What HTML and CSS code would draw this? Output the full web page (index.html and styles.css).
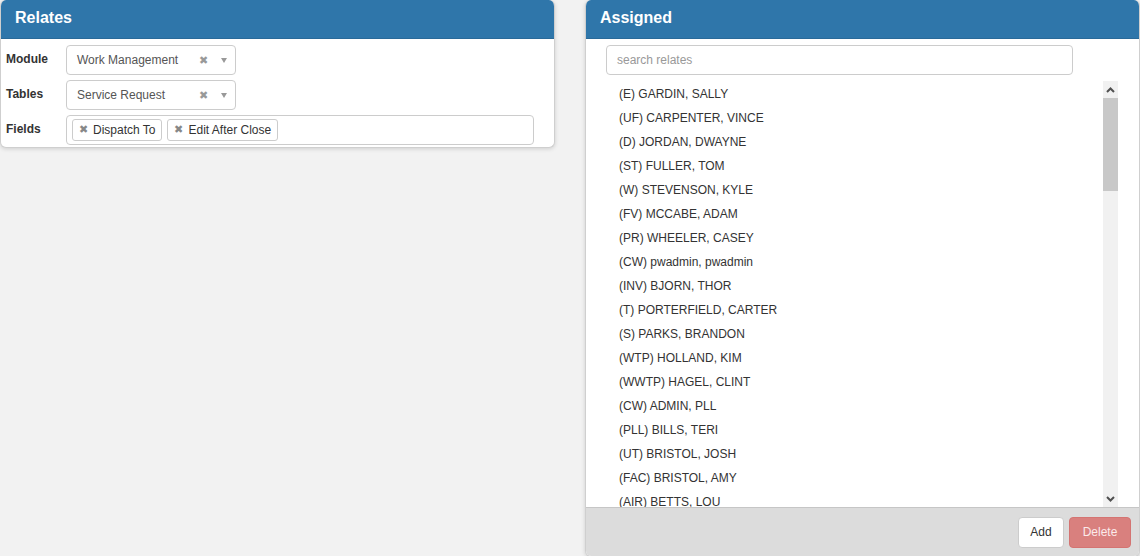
FILE: index.html
```html
<!DOCTYPE html>
<html lang="en">
<head>
    <meta charset="UTF-8">
    <title>Relates</title>
    <link rel="stylesheet" href="styles.css">
</head>
<body>
    <div class="page">
        <div class="panel relates">
            <div class="panel-heading">Relates</div>
            <div class="panel-body form">
                <div class="row">
                    <label>Module</label>
                    <div class="select">
                        <span class="value">Work Management</span>
                        <span class="clear">&#x2716;</span>
                        <span class="caret"></span>
                    </div>
                </div>
                <div class="row">
                    <label>Tables</label>
                    <div class="select">
                        <span class="value">Service Request</span>
                        <span class="clear">&#x2716;</span>
                        <span class="caret"></span>
                    </div>
                </div>
                <div class="row">
                    <label>Fields</label>
                    <div class="multi">
                        <span class="tag"><span class="x">&#x2716;</span>Dispatch To</span>
                        <span class="tag"><span class="x">&#x2716;</span>Edit After Close</span>
                    </div>
                </div>
            </div>
        </div>

        <div class="panel assigned">
            <div class="panel-heading">Assigned</div>
            <div class="panel-body">
                <div class="search">search relates</div>
                <div class="list-wrap">
                    <ul class="list">
                        <li>(E) GARDIN, SALLY</li>
                        <li>(UF) CARPENTER, VINCE</li>
                        <li>(D) JORDAN, DWAYNE</li>
                        <li>(ST) FULLER, TOM</li>
                        <li>(W) STEVENSON, KYLE</li>
                        <li>(FV) MCCABE, ADAM</li>
                        <li>(PR) WHEELER, CASEY</li>
                        <li>(CW) pwadmin, pwadmin</li>
                        <li>(INV) BJORN, THOR</li>
                        <li>(T) PORTERFIELD, CARTER</li>
                        <li>(S) PARKS, BRANDON</li>
                        <li>(WTP) HOLLAND, KIM</li>
                        <li>(WWTP) HAGEL, CLINT</li>
                        <li>(CW) ADMIN, PLL</li>
                        <li>(PLL) BILLS, TERI</li>
                        <li>(UT) BRISTOL, JOSH</li>
                        <li>(FAC) BRISTOL, AMY</li>
                        <li>(AIR) BETTS, LOU</li>
                    </ul>
                    <div class="scrollbar">
                        <div class="arrow">
                            <svg width="9" height="6" viewBox="0 0 9 6"><path d="M1 5 L4.5 1.5 L8 5" fill="none" stroke="#505050" stroke-width="2"/></svg>
                        </div>
                        <div class="track"><div class="thumb"></div></div>
                        <div class="arrow">
                            <svg width="9" height="6" viewBox="0 0 9 6"><path d="M1 1 L4.5 4.5 L8 1" fill="none" stroke="#505050" stroke-width="2"/></svg>
                        </div>
                    </div>
                </div>
            </div>
            <div class="panel-footer">
                <button class="btn">Add</button>
                <button class="btn btn-danger">Delete</button>
            </div>
        </div>
    </div>
</body>
</html>
```

FILE: styles.css
```css
body {
    margin: 0;
    background: #f2f2f2;
    font-family: 'Liberation Sans', Arial, sans-serif;
    font-size: 12px;
    color: #333;
}
.page {
    display: flex;
    align-items: flex-start;
    height: 556px;
    overflow: hidden;
}
.panel {
    background: #fff;
    border: 1px solid #cfcfcf;
    border-top: none;
    border-radius: 6px;
    box-shadow: 0 1px 4px rgba(0, 0, 0, 0.15);
    overflow: hidden;
}
.relates {
    width: 553px;
}
.assigned {
    width: 553px;
    margin-left: 30px;
    height: 556px;
    display: flex;
    flex-direction: column;
}
.panel-heading {
    height: 39px;
    line-height: 36px;
    background: #2f76aa;
    border-bottom: 1px solid #2a6a99;
    box-sizing: border-box;
    color: #fff;
    font-size: 16px;
    font-weight: bold;
    padding-left: 14px;
}
.form {
    padding: 6px 0 2px 5px;
}
.row {
    display: flex;
    align-items: center;
    margin-bottom: 5px;
}
.row:last-child {
    margin-bottom: 0;
}
.row label {
    width: 60px;
    font-weight: bold;
    position: relative;
    top: -1px;
}
.select {
    width: 170px;
    height: 30px;
    box-sizing: border-box;
    border: 1px solid #ccc;
    border-radius: 4px;
    display: flex;
    align-items: center;
    padding-left: 10px;
    color: #555;
}
.select .value {
    flex: 1;
}
.select .clear {
    color: #999;
    font-size: 11px;
    margin-right: 13px;
}
.caret {
    width: 0;
    height: 0;
    border-left: 3px solid transparent;
    border-right: 3px solid transparent;
    border-top: 5px solid #999;
    margin-right: 8px;
}
.multi {
    width: 468px;
    height: 30px;
    box-sizing: border-box;
    border: 1px solid #ccc;
    border-radius: 4px;
    display: flex;
    align-items: center;
    gap: 5px;
    padding-left: 5px;
}
.tag {
    border: 1px solid #ccc;
    border-radius: 3px;
    height: 22px;
    box-sizing: border-box;
    line-height: 20px;
    padding: 0 6px 0 6px;
    color: #333;
}
.tag .x {
    color: #888;
    font-size: 11px;
    margin-right: 5px;
    position: relative;
    top: -1px;
}
.assigned .panel-body {
    flex: 1;
    padding: 6px 20px 0 20px;
    display: flex;
    flex-direction: column;
    min-height: 0;
}
.search {
    width: 467px;
    height: 30px;
    box-sizing: border-box;
    line-height: 28px;
    border: 1px solid #ccc;
    border-radius: 4px;
    padding-left: 10px;
    color: #999;
}
.list-wrap {
    display: flex;
    margin-top: 6px;
    height: 426px;
}
.list {
    list-style: none;
    margin: 0;
    padding: 1px 0 0 13px;
    width: 484px;
    overflow: hidden;
}
.list li {
    height: 24px;
    line-height: 24px;
}
.scrollbar {
    width: 15px;
    background: #f1f1f1;
    display: flex;
    flex-direction: column;
}
.arrow {
    height: 17px;
    display: flex;
    align-items: center;
    justify-content: center;
}
.track {
    flex: 1;
}
.thumb {
    height: 93px;
    background: #c8c8c8;
}
.panel-footer {
    height: 48px;
    background: #dcdcdc;
    border-top: 1px solid #c6c6c6;
    display: flex;
    justify-content: flex-end;
    align-items: center;
    gap: 5px;
    padding-right: 8px;
}
.btn {
    font-family: 'Liberation Sans', Arial, sans-serif;
    font-size: 12px;
    height: 31px;
    width: 46px;
    padding: 0;
    border: 1px solid #ccc;
    border-radius: 4px;
    background: #fff;
    color: #333;
}
.btn-danger {
    width: 62px;
    background: #d9807e;
    border-color: #d47472;
    color: #fbeaea;
}
```
